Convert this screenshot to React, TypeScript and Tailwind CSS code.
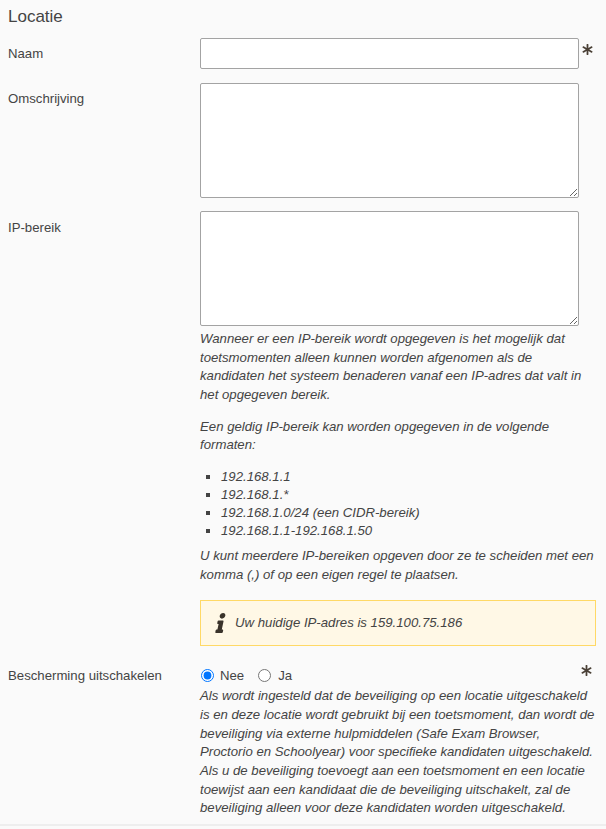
import React from 'react';
import { FaAsterisk, FaInfo } from 'react-icons/fa';

const Required = () => (
  <FaAsterisk className="w-[11px] h-[11px] text-[#4a4036]" />
);

export default function App() {
  return (
    <div className="min-h-[829px] bg-[#fafafa] font-['Liberation_Sans',Arial,sans-serif] text-[13.2px] text-[#444] overflow-hidden">
      <div className="border-b-2 border-[#eeeeee] pb-[1px] h-[826px]">
        <h2 className="pl-2 pt-[6px] text-[17px] leading-[22px] h-[38px] font-normal text-[#444]">Locatie</h2>

        <div className="flex">
          <label className="w-[200px] pl-2 pt-[7px] leading-[18px]">Naam</label>
          <input type="text" className="w-[379px] h-[31px] bg-white border border-[#a3a3a3] rounded-[2px]" />
          <div className="pl-[3px] pt-[6px]"><Required /></div>
        </div>

        <div className="flex mt-[14px]">
          <label className="w-[200px] pl-2 pt-[7px] leading-[18px]">Omschrijving</label>
          <textarea className="block w-[379px] h-[115px] bg-white border border-[#a3a3a3] rounded-[2px]" />
        </div>

        <div className="flex mt-[13px]">
          <label className="w-[200px] pl-2 pt-[8px] leading-[18px]">IP-bereik</label>
          <div className="w-[396px]">
            <textarea className="block w-[379px] h-[115px] bg-white border border-[#a3a3a3] rounded-[2px]" />
            <div className="italic mt-[4px] leading-[18.67px]">
              <p>
                Wanneer er een IP-bereik wordt opgegeven is het mogelijk dat toetsmomenten alleen kunnen worden afgenomen als de kandidaten het systeem benaderen vanaf een IP-adres dat valt in het opgegeven bereik.
              </p>
              <p className="mt-[13px]">
                Een geldig IP-bereik kan worden opgegeven in de volgende formaten:
              </p>
              <ul className="mt-[13px] pl-[21px] list-[square] leading-[18px]">
                <li>192.168.1.1</li>
                <li>192.168.1.*</li>
                <li>192.168.1.0/24 (een CIDR-bereik)</li>
                <li>192.168.1.1-192.168.1.50</li>
              </ul>
              <p className="mt-[7px]">
                U kunt meerdere IP-bereiken opgeven door ze te scheiden met een komma (,) of op een eigen regel te plaatsen.
              </p>
            </div>
            <div className="mt-[16px] h-[46px] flex items-center bg-[#fff8e6] border border-[#ffd966] pl-[14px]">
              <FaInfo className="w-[12px] h-[20px] -skew-x-12 text-[#3a332b]" />
              <span className="ml-[8px] italic">Uw huidige IP-adres is 159.100.75.186</span>
            </div>
          </div>
        </div>

        <div className="flex mt-[19px]">
          <label className="w-[200px] pl-2 leading-[21px]">Bescherming uitschakelen</label>
          <div className="w-[396px]">
            <div className="flex items-center h-[21px] relative">
              <input type="radio" name="bescherming" defaultChecked className="w-[13px] h-[13px] ml-[1px] accent-[#0075ff] appearance-auto" />
              <span className="ml-[6px]">Nee</span>
              <input type="radio" name="bescherming" className="w-[13px] h-[13px] ml-[14px] appearance-auto" />
              <span className="ml-[7px]">Ja</span>
              <div className="absolute right-[4px] top-0"><Required /></div>
            </div>
            <p className="italic leading-[18.67px] mt-[1px]">
              Als wordt ingesteld dat de beveiliging op een locatie uitgeschakeld is en deze locatie wordt gebruikt bij een toetsmoment, dan wordt de beveiliging via externe hulpmiddelen (Safe Exam Browser, Proctorio en Schoolyear) voor specifieke kandidaten uitgeschakeld. Als u de beveiliging toevoegt aan een toetsmoment en een locatie toewijst aan een kandidaat die de beveiliging uitschakelt, zal de beveiliging alleen voor deze kandidaten worden uitgeschakeld.
            </p>
          </div>
        </div>
      </div>
    </div>
  );
}
